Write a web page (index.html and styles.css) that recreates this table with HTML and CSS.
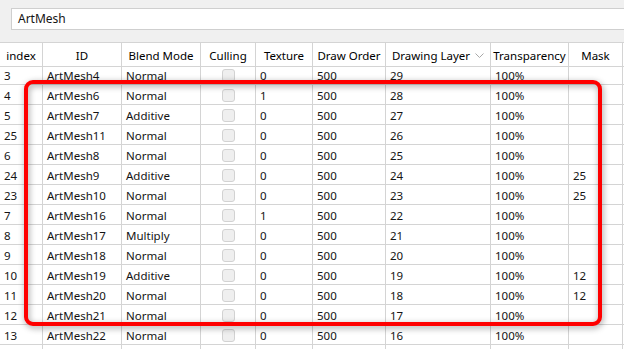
FILE: index.html
```html
<!DOCTYPE html>
<html lang="en">
<head>
  <meta charset="UTF-8" />
  <title>ArtMesh table</title>
  <link rel="stylesheet" href="styles.css">
</head>
<body>
  <div class="toolbar">
    <div class="search">ArtMesh</div>
  </div>

  <div class="table">
    <div class="row head">
      <div class="cell">index</div>
      <div class="cell">ID</div>
      <div class="cell">Blend Mode</div>
      <div class="cell">Culling</div>
      <div class="cell">Texture</div>
      <div class="cell">Draw Order</div>
      <div class="cell">Drawing Layer
        <svg class="sort" viewBox="0 0 9 5"><path d="M0.5 0.5 4.5 4.5 8.5 0.5"/></svg>
      </div>
      <div class="cell">Transparency</div>
      <div class="cell">Mask</div>
      <div class="cell"></div>
    </div>

    <div class="scroller">
      <div class="rows">
        <div class="row"><div class="cell">3</div><div class="cell">ArtMesh4</div><div class="cell">Normal</div><div class="cell"><span class="check"></span></div><div class="cell">0</div><div class="cell">500</div><div class="cell">29</div><div class="cell">100%</div><div class="cell"></div><div class="cell"></div></div>
        <div class="row"><div class="cell">4</div><div class="cell">ArtMesh6</div><div class="cell">Normal</div><div class="cell"><span class="check"></span></div><div class="cell">1</div><div class="cell">500</div><div class="cell">28</div><div class="cell">100%</div><div class="cell"></div><div class="cell"></div></div>
        <div class="row"><div class="cell">5</div><div class="cell">ArtMesh7</div><div class="cell">Additive</div><div class="cell"><span class="check"></span></div><div class="cell">0</div><div class="cell">500</div><div class="cell">27</div><div class="cell">100%</div><div class="cell"></div><div class="cell"></div></div>
        <div class="row"><div class="cell">25</div><div class="cell">ArtMesh11</div><div class="cell">Normal</div><div class="cell"><span class="check"></span></div><div class="cell">0</div><div class="cell">500</div><div class="cell">26</div><div class="cell">100%</div><div class="cell"></div><div class="cell"></div></div>
        <div class="row"><div class="cell">6</div><div class="cell">ArtMesh8</div><div class="cell">Normal</div><div class="cell"><span class="check"></span></div><div class="cell">0</div><div class="cell">500</div><div class="cell">25</div><div class="cell">100%</div><div class="cell"></div><div class="cell"></div></div>
        <div class="row"><div class="cell">24</div><div class="cell">ArtMesh9</div><div class="cell">Additive</div><div class="cell"><span class="check"></span></div><div class="cell">0</div><div class="cell">500</div><div class="cell">24</div><div class="cell">100%</div><div class="cell">25</div><div class="cell"></div></div>
        <div class="row"><div class="cell">23</div><div class="cell">ArtMesh10</div><div class="cell">Normal</div><div class="cell"><span class="check"></span></div><div class="cell">0</div><div class="cell">500</div><div class="cell">23</div><div class="cell">100%</div><div class="cell">25</div><div class="cell"></div></div>
        <div class="row"><div class="cell">7</div><div class="cell">ArtMesh16</div><div class="cell">Normal</div><div class="cell"><span class="check"></span></div><div class="cell">1</div><div class="cell">500</div><div class="cell">22</div><div class="cell">100%</div><div class="cell"></div><div class="cell"></div></div>
        <div class="row"><div class="cell">8</div><div class="cell">ArtMesh17</div><div class="cell">Multiply</div><div class="cell"><span class="check"></span></div><div class="cell">0</div><div class="cell">500</div><div class="cell">21</div><div class="cell">100%</div><div class="cell"></div><div class="cell"></div></div>
        <div class="row"><div class="cell">9</div><div class="cell">ArtMesh18</div><div class="cell">Normal</div><div class="cell"><span class="check"></span></div><div class="cell">0</div><div class="cell">500</div><div class="cell">20</div><div class="cell">100%</div><div class="cell"></div><div class="cell"></div></div>
        <div class="row"><div class="cell">10</div><div class="cell">ArtMesh19</div><div class="cell">Additive</div><div class="cell"><span class="check"></span></div><div class="cell">0</div><div class="cell">500</div><div class="cell">19</div><div class="cell">100%</div><div class="cell">12</div><div class="cell"></div></div>
        <div class="row"><div class="cell">11</div><div class="cell">ArtMesh20</div><div class="cell">Normal</div><div class="cell"><span class="check"></span></div><div class="cell">0</div><div class="cell">500</div><div class="cell">18</div><div class="cell">100%</div><div class="cell">12</div><div class="cell"></div></div>
        <div class="row"><div class="cell">12</div><div class="cell">ArtMesh21</div><div class="cell">Normal</div><div class="cell"><span class="check"></span></div><div class="cell">0</div><div class="cell">500</div><div class="cell">17</div><div class="cell">100%</div><div class="cell"></div><div class="cell"></div></div>
        <div class="row"><div class="cell">13</div><div class="cell">ArtMesh22</div><div class="cell">Normal</div><div class="cell"><span class="check"></span></div><div class="cell">0</div><div class="cell">500</div><div class="cell">16</div><div class="cell">100%</div><div class="cell"></div><div class="cell"></div></div>
        <div class="row"><div class="cell"></div><div class="cell"></div><div class="cell"></div><div class="cell"><span class="check"></span></div><div class="cell"></div><div class="cell"></div><div class="cell"></div><div class="cell"></div><div class="cell"></div><div class="cell"></div></div>
      </div>
    </div>
  </div>

  <!-- highlight drawn over the table -->
  <div class="highlight"></div>
</body>
</html>
```

FILE: styles.css
```css
:root {
  --grid: #d4d4d4;
  --text: #141414;
  --panel: #f0f0f0;
}

* {
  margin: 0;
  padding: 0;
  box-sizing: border-box;
}

html, body {
  width: 624px;
  height: 349px;
  overflow: hidden;
}

body {
  position: relative;
  font-family: 'Noto Sans', sans-serif;
  font-size: 11.5px;
  color: var(--text);
  background: var(--panel);
}

.toolbar {
  height: 42px;
  padding: 8px 0 0 11px;
}

.search {
  height: 22px;
  margin-right: -6px;
  padding: 0 6px;
  line-height: 20px;
  background: #ffffff;
  border: 1px solid #cfcfcf;
  font-size: 12px;
}

.table {
  background: #ffffff;
  border-top: 1px solid var(--grid);
}

.row {
  display: grid;
  grid-template-columns: 43px 79px 79px 55px 57px 73px 105px 78px 54px 1fr;
  height: 20px;
  border-bottom: 1px solid var(--grid);
}

.cell {
  border-right: 1px solid var(--grid);
  padding: 1px 4px 0;
  line-height: 19px;
  white-space: nowrap;
  overflow: hidden;
}

.cell:last-child {
  border-right: none;
}

.head {
  height: 24px;
  position: relative;
  z-index: 1;
  background: #ffffff;
}

.head .cell {
  display: flex;
  align-items: center;
  justify-content: center;
  gap: 5px;
  padding: 1px 0 0;
  color: #000;
}

.sort {
  width: 9px;
  height: 5px;
  fill: none;
  stroke: #a8a8a8;
  stroke-width: 1;
}

.scroller {
  height: 283px;
  overflow: hidden;
}

.rows {
  margin-top: -2px;
}

.check {
  display: block;
  width: 13px;
  height: 13px;
  margin: 3px auto 0;
  background: #efefef;
  border: 1px solid #d2d2d2;
  border-radius: 3px;
}

.highlight {
  position: absolute;
  left: 24px;
  top: 80px;
  width: 578px;
  height: 246px;
  border: 4px solid #ff0000;
  border-radius: 9px;
  filter: drop-shadow(1px 2px 3px rgba(0, 0, 0, 0.4));
}
```
